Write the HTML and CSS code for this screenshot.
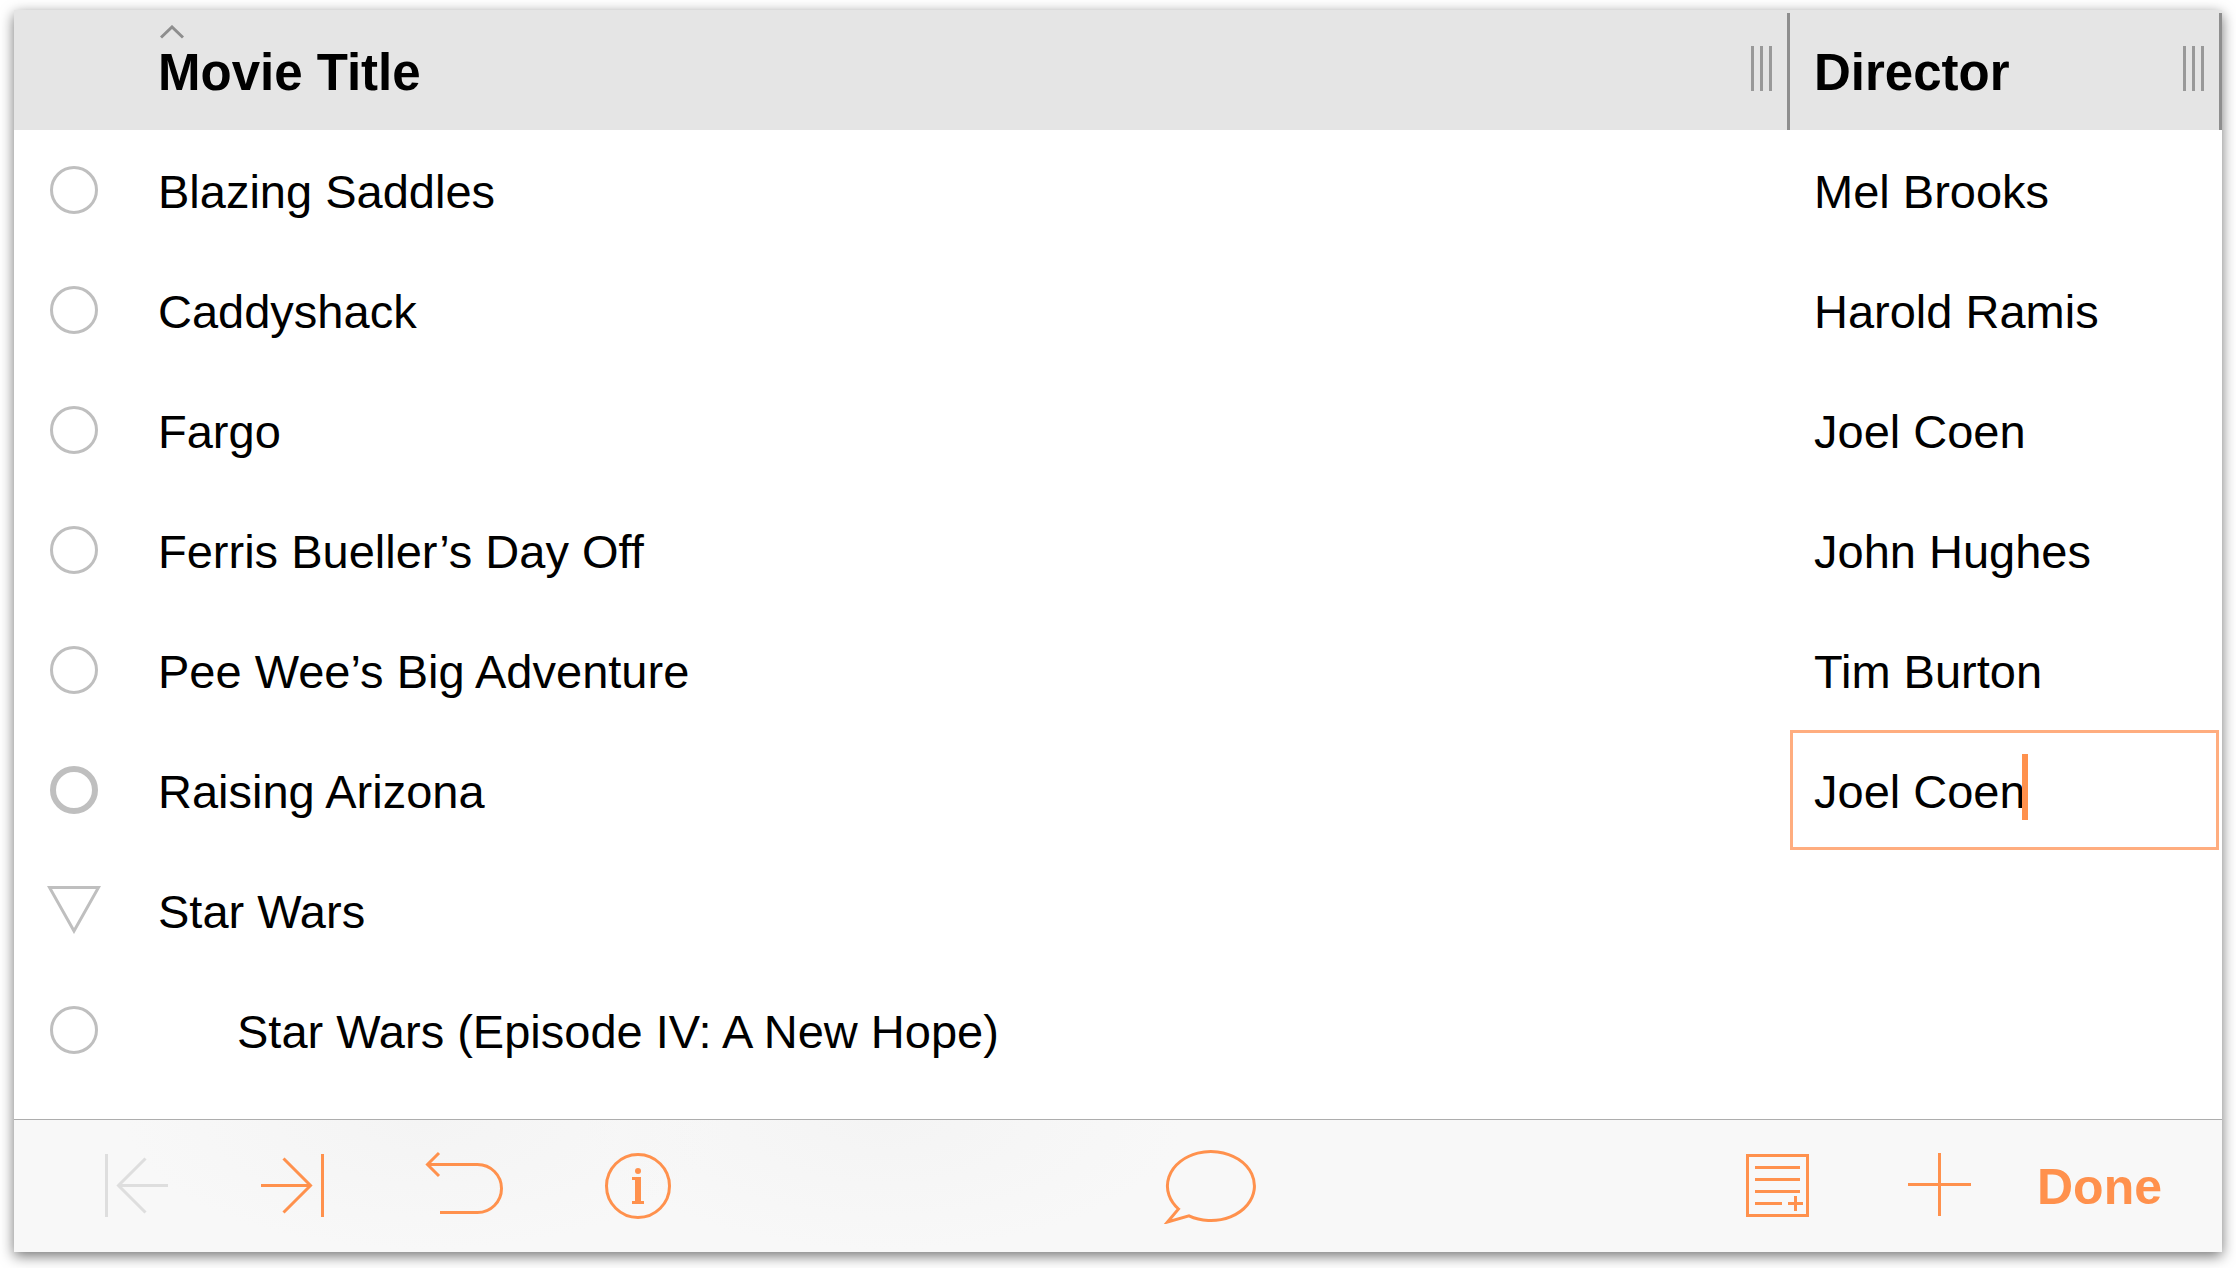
FILE: index.html
```
<!DOCTYPE html>
<html lang="en">
<head>
    <meta charset="UTF-8">
    <meta name="viewport" content="width=device-width, initial-scale=1.0">
    <title>Movies</title>
    <link rel="stylesheet" href="styles.css">
</head>
<body>
    <main class="window">
        <table class="outline">
            <colgroup>
                <col class="col-handle">
                <col>
                <col class="col-director">
            </colgroup>
            <thead>
                <tr>
                    <td></td>
                    <th scope="col">
                        Movie Title
                        <svg class="sort" viewBox="0 0 24 14" aria-hidden="true"><path d="M1 12.500L12 2L23 12.500"/></svg>
                        <button type="button" class="grip" aria-label="Resize Movie Title column"></button>
                    </th>
                    <th scope="col">
                        Director
                        <button type="button" class="grip" aria-label="Resize Director column"></button>
                    </th>
                </tr>
            </thead>
            <tbody>
                <tr>
                    <td class="handle-cell"><button type="button" class="handle" aria-label="Select row"></button></td>
                    <td>Blazing Saddles</td>
                    <td>Mel Brooks</td>
                </tr>
                <tr>
                    <td class="handle-cell"><button type="button" class="handle" aria-label="Select row"></button></td>
                    <td>Caddyshack</td>
                    <td>Harold Ramis</td>
                </tr>
                <tr>
                    <td class="handle-cell"><button type="button" class="handle" aria-label="Select row"></button></td>
                    <td>Fargo</td>
                    <td>Joel Coen</td>
                </tr>
                <tr>
                    <td class="handle-cell"><button type="button" class="handle" aria-label="Select row"></button></td>
                    <td>Ferris Bueller’s Day Off</td>
                    <td>John Hughes</td>
                </tr>
                <tr>
                    <td class="handle-cell"><button type="button" class="handle" aria-label="Select row"></button></td>
                    <td>Pee Wee’s Big Adventure</td>
                    <td>Tim Burton</td>
                </tr>
                <tr>
                    <td class="handle-cell"><button type="button" class="handle current" aria-label="Select row"></button></td>
                    <td>Raising Arizona</td>
                    <td class="editing">
                        <input type="text" name="director" value="Joel Coen" aria-label="Director">
                        <span class="caret"></span>
                    </td>
                </tr>
                <tr>
                    <td class="handle-cell">
                        <button type="button" class="disclosure" aria-label="Collapse row">
                            <svg width="54" height="48" viewBox="0 0 54 48"><path d="M2.500 1.500H51.500L27 45Z"/></svg>
                        </button>
                    </td>
                    <td>Star Wars</td>
                    <td></td>
                </tr>
                <tr>
                    <td class="handle-cell"><button type="button" class="handle" aria-label="Select row"></button></td>
                    <td class="child">Star Wars (Episode IV: A New Hope)</td>
                    <td></td>
                </tr>
            </tbody>
        </table>

        <footer class="toolbar">
            <div class="tools">
                <button type="button" aria-label="Outdent" disabled>
                    <svg width="64" height="76" viewBox="0 0 64 76"><path d="M1.500 6V69M63 37.500H13M40.500 10.500L13.500 37.500L40.500 64.500"/></svg>
                </button>
                <button type="button" aria-label="Indent">
                    <svg width="64" height="76" viewBox="0 0 64 76"><path d="M61.500 6V69M0 37.500H50M22.500 10.500L49.500 37.500L22.500 64.500"/></svg>
                </button>
                <button type="button" aria-label="Undo">
                    <svg width="94" height="76" viewBox="0 0 94 76"><path d="M23 64.500H60.500A24 24 0 0 0 60.500 16.500H11M22 5L10.500 16.500L22 28"/></svg>
                </button>
                <button type="button" aria-label="Info">
                    <svg width="70" height="76" viewBox="0 0 70 76">
                        <circle cx="35" cy="38" r="31.500"/>
                        <circle class="solid" cx="35" cy="23" r="3"/>
                        <path class="solid" d="M29 29H38V53H41V56H29V53H32V32H29Z"/>
                    </svg>
                </button>
            </div>
            <button type="button" aria-label="Note">
                <svg width="94" height="76" viewBox="0 0 94 76"><path d="M15.500 61A43.500 34.500 0 1 1 26 67.800L4.500 74Z"/></svg>
            </button>
            <div class="actions">
                <button type="button" aria-label="Add note row">
                    <svg width="63" height="76" viewBox="0 0 63 76"><path d="M1.500 7.500H61.500V67.500H1.500ZM9 19.500H54M9 31.500H54M9 43.500H54M9 55.500H36M42 55.500H57M49.500 48V63"/></svg>
                </button>
                <button type="button" aria-label="Add row">
                    <svg width="63" height="76" viewBox="0 0 63 76"><path d="M0 36.500H63M31.500 5V68"/></svg>
                </button>
                <button type="button" class="done">Done</button>
            </div>
        </footer>
    </main>
</body>
</html>
```
FILE: styles.css
```
* {
    box-sizing: border-box;
}

body {
    margin: 0;
    padding: 10px 14px 16px;
    min-height: 100vh;
    display: flex;
    background: #fff;
    color: #000;
    font-family: 'Helvetica Neue', Helvetica, 'Liberation Sans', Arial, sans-serif;
    font-size: 47px;
}

button {
    padding: 0;
    border: none;
    background: none;
    color: inherit;
    font: inherit;
    cursor: pointer;
}

svg {
    display: block;
    fill: none;
    stroke: currentColor;
    stroke-width: 3;
}

.window {
    flex: 1;
    display: flex;
    flex-direction: column;
    justify-content: space-between;
    background: #fff;
    border-radius: 4px 4px 0 0;
    box-shadow: 0 4px 14px rgba(0, 0, 0, 0.55);
}

/* Outline */
.outline {
    width: 100%;
    table-layout: fixed;
    border-collapse: collapse;
}

.col-handle {
    width: 120px;
}

.col-director {
    width: 432px;
}

.outline tr {
    height: 120px;
}

.outline th,
.outline td {
    padding: 2px 0 0 24px;
    text-align: left;
    vertical-align: middle;
    white-space: nowrap;
}

.outline thead {
    background: #e5e5e5;
}

.outline th {
    position: relative;
    padding-top: 4px;
    font-size: 51px;
    font-weight: bold;
}

/* column divider */
.outline th::after {
    content: "";
    position: absolute;
    top: 3px;
    right: 0;
    bottom: 0;
    width: 3px;
    background: #8e8e8e;
}

.sort {
    position: absolute;
    top: 15px;
    left: 26px;
    width: 24px;
    height: 14px;
    color: #8e8e8e;
}

.grip {
    position: absolute;
    top: 36px;
    right: 18px;
    width: 21px;
    height: 45px;
    background: repeating-linear-gradient(to right, #999 0 3px, transparent 3px 9px);
    cursor: col-resize;
}

.outline .handle-cell {
    padding: 0;
}

.handle,
.disclosure {
    display: block;
    margin: 0 auto;
}

.handle {
    width: 48px;
    height: 48px;
    border: 3px solid #bfbfbf;
    border-radius: 50%;
}

.handle.current {
    border-width: 6px;
}

.disclosure {
    color: #bfbfbf;
}

.outline .child {
    padding-left: 103px;
}

.outline .editing {
    position: relative;
    padding: 0 3px 0 0;
}

.editing input {
    display: block;
    width: 100%;
    height: 120px;
    padding: 2px 21px 0;
    border: 3px solid #ffad7f;
    border-radius: 0;
    outline: none;
    background: #fff;
    color: inherit;
    font: inherit;
}

.caret {
    position: absolute;
    top: 24px;
    left: 232px;
    width: 6px;
    height: 66px;
    background: #ff914d;
}

/* Toolbar */
.toolbar {
    display: flex;
    justify-content: space-between;
    align-items: center;
    height: 133px;
    padding: 0 60px 0 91px;
    border-top: 1px solid #adadad;
    background:
        radial-gradient(ellipse 300px 130px at 410px 0, #f4f4f4, transparent),
        radial-gradient(ellipse 300px 130px at 870px 0, #f4f4f4, transparent),
        #f8f8f8;
    color: #ff914d;
}

.tools {
    display: flex;
    gap: 92px;
}

.actions {
    display: flex;
    align-items: center;
    gap: 66px;
}

.toolbar button:disabled {
    color: #dedede;
}

.toolbar .solid {
    fill: currentColor;
    stroke: none;
}

.actions button:first-child {
    margin-right: 33px;
}

.done {
    padding-top: 2px;
    font-size: 50px;
    font-weight: bold;
}
```
